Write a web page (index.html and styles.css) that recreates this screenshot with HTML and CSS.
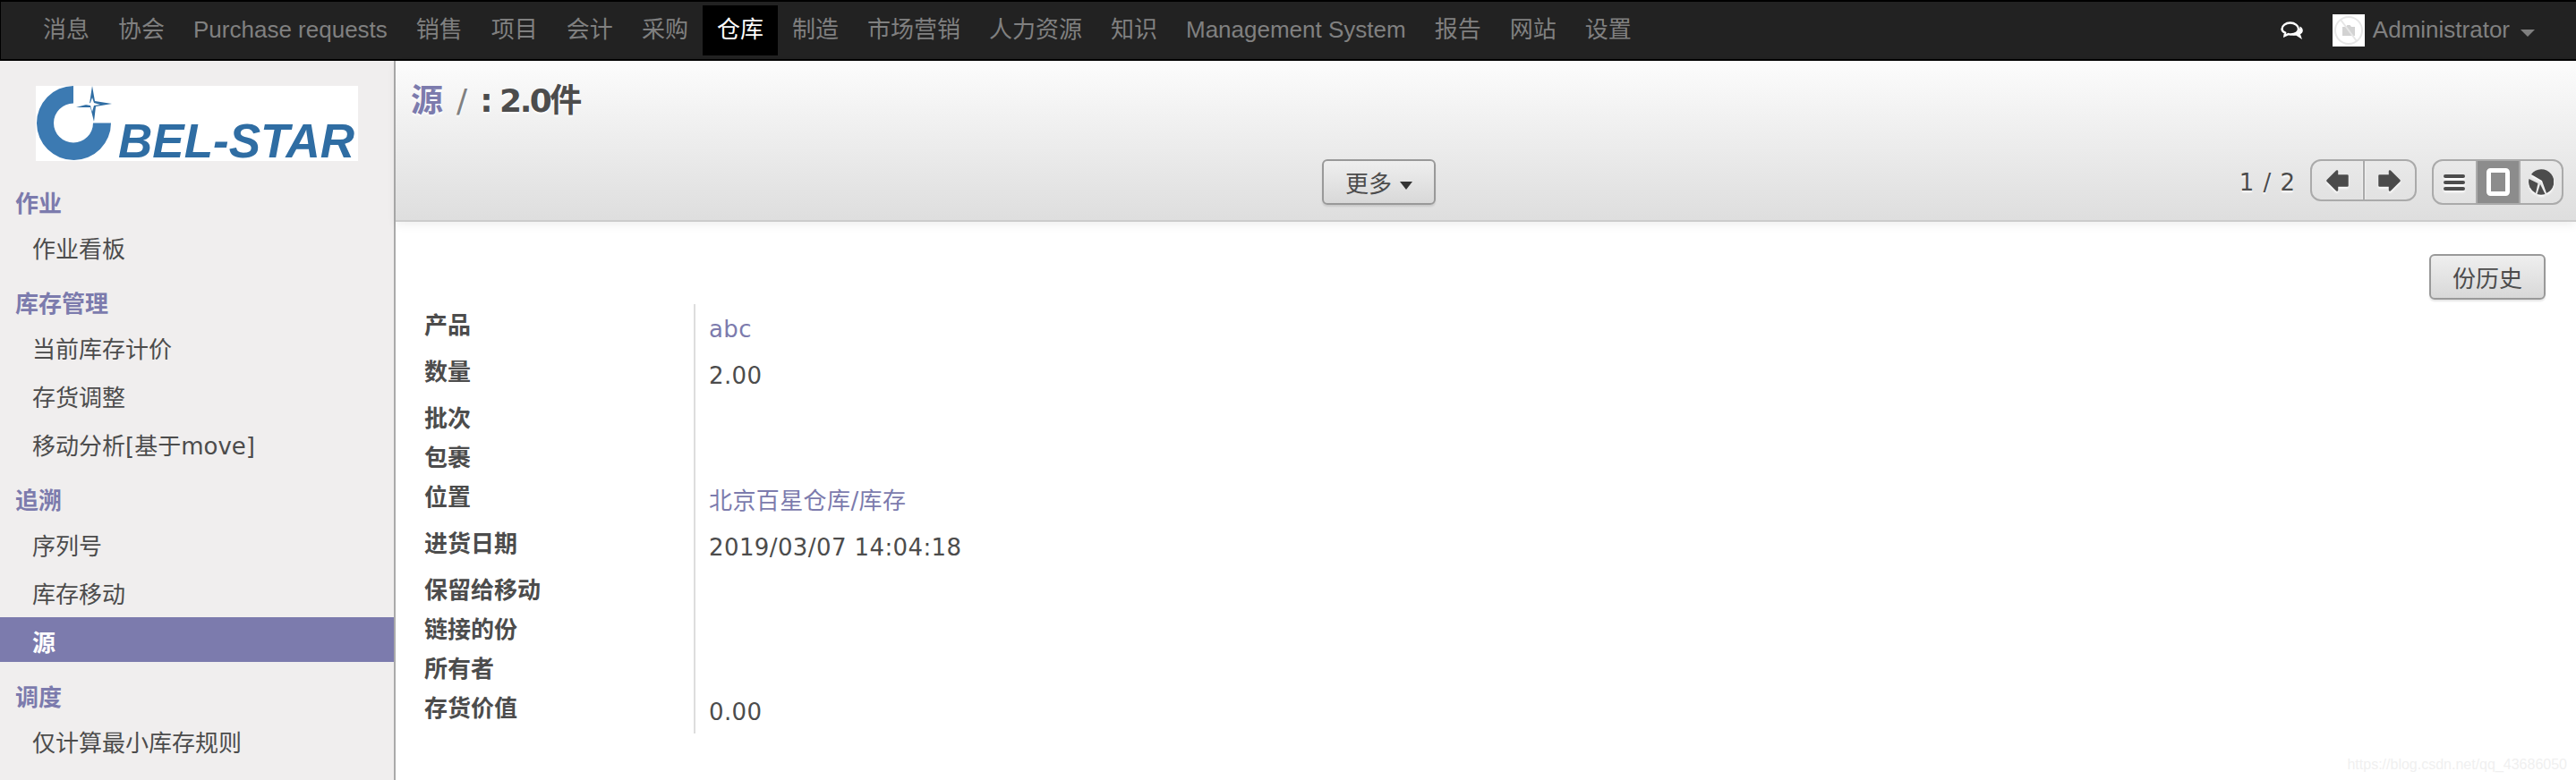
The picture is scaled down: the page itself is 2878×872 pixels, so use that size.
FILE: index.html
```html
<!DOCTYPE html>
<html>
    <head>
        <title>源 / : 2.0件</title>
        <meta charset="utf-8">
        <link rel="stylesheet" href="styles.css">
    </head>
    <body>
        <nav class="topbar">
            <ul class="topmenu">
                <li><a href="#">消息</a></li>
                <li><a href="#">协会</a></li>
                <li><a href="#">Purchase requests</a></li>
                <li><a href="#">销售</a></li>
                <li><a href="#">项目</a></li>
                <li><a href="#">会计</a></li>
                <li><a href="#">采购</a></li>
                <li><a class="active" href="#">仓库</a></li>
                <li><a href="#">制造</a></li>
                <li><a href="#">市场营销</a></li>
                <li><a href="#">人力资源</a></li>
                <li><a href="#">知识</a></li>
                <li><a href="#">Management System</a></li>
                <li><a href="#">报告</a></li>
                <li><a href="#">网站</a></li>
                <li><a href="#">设置</a></li>
            </ul>
            <div class="usermenu">
                <svg class="chat_icon" viewBox="0 0 26 21" width="26" height="21">
                    <path d="M20 8.500c0 3.600-3.800 6-8.500 6-1 0-2-.1-2.900-.4L4.500 16l.6-3.300C2.800 11.700 1.500 10.200 1.500 8.500c0-3.700 4.100-7 9.200-7S20 4.800 20 8.500z" fill="none" stroke="#fff" stroke-width="2.400"/>
                    <path d="M21.500 5.500c2.500 1.300 3.500 3.200 3.300 5-.2 1.700-1.200 3-2.800 3.800l2 5.700-6.500-4.200c-2.400.2-5-.3-6.500-1.300 5.500.6 10.800-2.700 10.500-9z" fill="#fff"/>
                </svg>
                <span class="avatar">
                    <svg viewBox="0 0 36 36" width="36" height="36">
                        <circle cx="18" cy="18" r="15" fill="none" stroke="#e6e6e6" stroke-width="2"/>
                        <path d="M11 14h4l1.500-2h3l1.500 2h4v10H11z" fill="#d2d2d2"/>
                        <path d="M9 6l18 24" stroke="#e6e6e6" stroke-width="2"/>
                    </svg>
                </span>
                <span class="username">Administrator</span>
                <span class="user_caret"></span>
            </div>
        </nav>

        <div class="main">
            <aside class="sidebar">
                <svg class="logo" viewBox="0 0 360 84" width="360" height="84">
                    <rect width="360" height="84" fill="#fff"/>
                    <path d="M42 0A41.500 41.500 0 1 0 84 41.500H64A22 22 0 1 1 42 19.500z" fill="#3c7ab2"/>
                    <path d="M63 0l3 17 19 3-18 3-2 17-4-16-16 0 15-4z" fill="#2f6da3"/>
                    <path d="M63 13l2 6 7 2-7 1-2 7-2-7-6-1 6-2z" fill="#fff"/>
                    <text class="logo_text" x="92" y="80">BEL-STAR</text>
                </svg>

                <div class="menu_head">作业</div>
                <a class="menu_item" href="#">作业看板</a>

                <div class="menu_head">库存管理</div>
                <a class="menu_item" href="#">当前库存计价</a>
                <a class="menu_item" href="#">存货调整</a>
                <a class="menu_item" href="#">移动分析[基于move]</a>

                <div class="menu_head">追溯</div>
                <a class="menu_item" href="#">序列号</a>
                <a class="menu_item" href="#">库存移动</a>
                <a class="menu_item selected" href="#">源</a>

                <div class="menu_head">调度</div>
                <a class="menu_item" href="#">仅计算最小库存规则</a>
            </aside>

            <div class="content">
                <header class="control_panel">
                    <h2 class="breadcrumb"><a href="#">源</a><span class="crumb_sep">/</span><span class="crumb_name">: 2.0件</span></h2>
                    <div class="cp_bar">
                        <button class="btn">更多<span class="btn_caret"></span></button>
                        <div class="cp_right">
                            <span class="pager">1 / 2</span>
                            <div class="btn_group arrows">
                                <a class="cell" href="#">
                                    <svg viewBox="0 0 25 24" width="25" height="24"><path class="arrow" d="M12 1.500L1.500 12L12 22.500V17.500H23.500V6.500H12z"/></svg>
                                </a>
                                <a class="cell" href="#">
                                    <svg viewBox="0 0 25 24" width="25" height="24"><path class="arrow" d="M13 1.500L23.500 12L13 22.500V17.500H1.500V6.500H13z"/></svg>
                                </a>
                            </div>
                            <div class="btn_group views">
                                <a class="cell" href="#">
                                    <svg viewBox="0 0 24 18" width="24" height="18"><rect width="24" height="4" rx="2" y="0"/><rect width="24" height="4" rx="2" y="7"/><rect width="24" height="4" rx="2" y="14"/></svg>
                                </a>
                                <a class="cell current" href="#">
                                    <svg viewBox="0 0 26 31" width="26" height="31"><rect x="2.500" y="2.500" width="21" height="26" rx="2" fill="#8c8c8c" stroke="#fff" stroke-width="5"/></svg>
                                </a>
                                <a class="cell" href="#">
                                    <svg viewBox="0 0 28 29" width="28" height="29">
                                        <path d="M3 6L15 13L20 27A14 14 0 1 0 3 6z"/>
                                        <path d="M.5 11L10.500 16L8 27A14 14 0 0 1 .5 11z"/>
                                        <path d="M13 17L18.500 28A14 14 0 0 1 9.500 28z"/>
                                    </svg>
                                </a>
                            </div>
                        </div>
                    </div>
                </header>

                <section class="sheet">
                    <div class="sheet_buttons">
                        <button class="btn">份历史</button>
                    </div>
                    <table class="form_table">
                        <tr class="tall"><th>产品</th><td><a href="#">abc</a></td></tr>
                        <tr class="tall"><th>数量</th><td>2.00</td></tr>
                        <tr><th>批次</th><td></td></tr>
                        <tr><th>包裹</th><td></td></tr>
                        <tr class="tall"><th>位置</th><td><a href="#">北京百星仓库/库存</a></td></tr>
                        <tr class="tall"><th>进货日期</th><td>2019/03/07 14:04:18</td></tr>
                        <tr><th>保留给移动</th><td></td></tr>
                        <tr><th>链接的份</th><td></td></tr>
                        <tr><th>所有者</th><td></td></tr>
                        <tr class="tall"><th>存货价值</th><td>0.00</td></tr>
                    </table>
                </section>
            </div>
        </div>

        <div class="watermark">https://blog.csdn.net/qq_43686050</div>
    </body>
</html>
```

FILE: styles.css
```css
body {
    margin: 0;
    padding: 0;
    height: 872px;
    overflow: hidden;
    display: flex;
    flex-direction: column;
    font-family: "DejaVu Sans", "Noto Sans CJK SC", sans-serif;
    font-size: 26px;
    color: #4c4c4c;
    background: white;
}

a {
    text-decoration: none;
    color: #7c7bad;
}

/* top bar */
.topbar {
    height: 68px;
    box-sizing: border-box;
    display: flex;
    align-items: center;
    justify-content: space-between;
    background: #222;
    border-top: 2px solid black;
    border-bottom: 2px solid black;
    border-left: 1px solid black;
    font-family: "Liberation Sans", "Noto Sans CJK SC", sans-serif;
}

.topmenu {
    list-style-type: none;
    margin: 0;
    padding: 0 0 0 31px;
    display: flex;
}

.topmenu a {
    display: block;
    height: 56px;
    line-height: 54px;
    padding: 0 16px;
    color: #808080;
}

.topmenu a.active {
    background: black;
    color: white;
}

.usermenu {
    display: flex;
    align-items: center;
    padding-right: 46px;
    color: #808080;
}

.chat_icon {
    margin-right: 32px;
}

.avatar {
    display: flex;
    width: 36px;
    height: 36px;
    background: white;
    margin-right: 9px;
}

.username {
    margin-top: -2px;
}

.user_caret {
    margin: 6px 0 0 12px;
    border-top: 8px solid #808080;
    border-left: 8px solid transparent;
    border-right: 8px solid transparent;
}

/* main area */
.main {
    flex: 1;
    display: flex;
    min-height: 0;
}

.sidebar {
    width: 442px;
    box-sizing: border-box;
    flex-shrink: 0;
    background: #f0eeee;
    border-right: 2px solid #aaa;
}

.logo {
    display: block;
    margin: 28px 0 12px 40px;
    overflow: visible;
}

.logo_text {
    font-family: "Liberation Sans", sans-serif;
    font-size: 53px;
    font-weight: bold;
    font-style: italic;
    fill: #2f6da3;
}

.menu_head {
    height: 44px;
    padding: 14px 0 0 17px;
    line-height: 44px;
    font-weight: bold;
    color: #7c7bad;
}

.menu_item {
    display: block;
    height: 50px;
    line-height: 58px;
    padding-left: 36px;
    margin-bottom: 4px;
    color: #4c4c4c;
}

.menu_item.selected {
    background: #7c7bad;
    color: white;
    font-weight: bold;
}

.content {
    flex: 1;
    min-width: 0;
    display: flex;
    flex-direction: column;
}

/* control panel */
.control_panel {
    height: 180px;
    box-sizing: border-box;
    padding: 0 14px 0 17px;
    background: linear-gradient(#fcfcfc, #dedede);
    border-bottom: 2px solid #ccc;
    box-shadow: 0 4px 10px rgba(0, 0, 0, 0.06);
}

.breadcrumb {
    margin: 0;
    height: 110px;
    line-height: 90px;
    font-size: 36px;
    font-weight: bold;
    text-shadow: 0 2px 2px white;
}

.crumb_sep {
    font-weight: normal;
    color: #808080;
    margin: 0 14px 0 15px;
}

.crumb_name {
    letter-spacing: -2.500px;
}

.cp_bar {
    display: flex;
    align-items: flex-start;
    justify-content: space-between;
    padding-left: 1018px;
}

.btn {
    height: 51px;
    box-sizing: border-box;
    padding: 0 24px;
    font-family: inherit;
    font-size: 26px;
    color: #4c4c4c;
    background: linear-gradient(#efefef, #d8d8d8);
    border: 2px solid #999;
    border-radius: 6px;
    box-shadow: 0 2px 2px rgba(0, 0, 0, 0.1);
}

.btn_caret {
    display: inline-block;
    vertical-align: middle;
    margin-left: 9px;
    border-top: 9px solid #333;
    border-left: 7px solid transparent;
    border-right: 7px solid transparent;
}

.cp_right {
    display: flex;
    align-items: flex-start;
}

.pager {
    margin: 11px 17px 0 0;
    word-spacing: 2px;
    text-shadow: 0 2px 2px white;
}

.btn_group {
    display: flex;
    box-sizing: border-box;
    border: 2px solid #aaa;
    border-radius: 12px;
    overflow: hidden;
}

.btn_group .cell {
    display: flex;
    align-items: center;
    justify-content: center;
    fill: #4c4c4c;
    filter: drop-shadow(0 2px 1px white);
}

.arrow {
    stroke: #4c4c4c;
    stroke-width: 2.500;
    stroke-linejoin: round;
}

.arrows {
    width: 119px;
    height: 47px;
    margin-right: 17px;
}

.arrows .cell {
    width: 59px;
}

.arrows .cell + .cell {
    border-left: 2px solid #aaa;
}

.views {
    width: 147px;
    height: 51px;
}

.views .cell {
    flex: 1;
}

.views .cell.current {
    flex: none;
    width: 46px;
    background: #8c8c8c;
    border-left: 2px solid #aaa;
    border-right: 2px solid #aaa;
    filter: none;
}

/* form */
.sheet {
    padding: 36px 34px 0 32px;
}

.sheet_buttons {
    display: flex;
    justify-content: flex-end;
}

.form_table {
    margin-top: 5px;
    border-collapse: collapse;
}

.form_table th {
    width: 301px;
    padding: 4px 0 0;
    line-height: 40px;
    text-align: left;
    vertical-align: top;
    font-weight: bold;
}

.form_table td {
    padding: 8px 0 0 15px;
    line-height: 40px;
    letter-spacing: 0.400px;
    vertical-align: top;
    border-left: 2px solid #ddd;
}

.form_table tr.tall {
    height: 52px;
}

.form_table tr {
    height: 44px;
}

.watermark {
    position: absolute;
    right: 10px;
    bottom: 8px;
    font-family: "Liberation Sans", sans-serif;
    font-size: 16px;
    color: #f0f0f0;
}
```
